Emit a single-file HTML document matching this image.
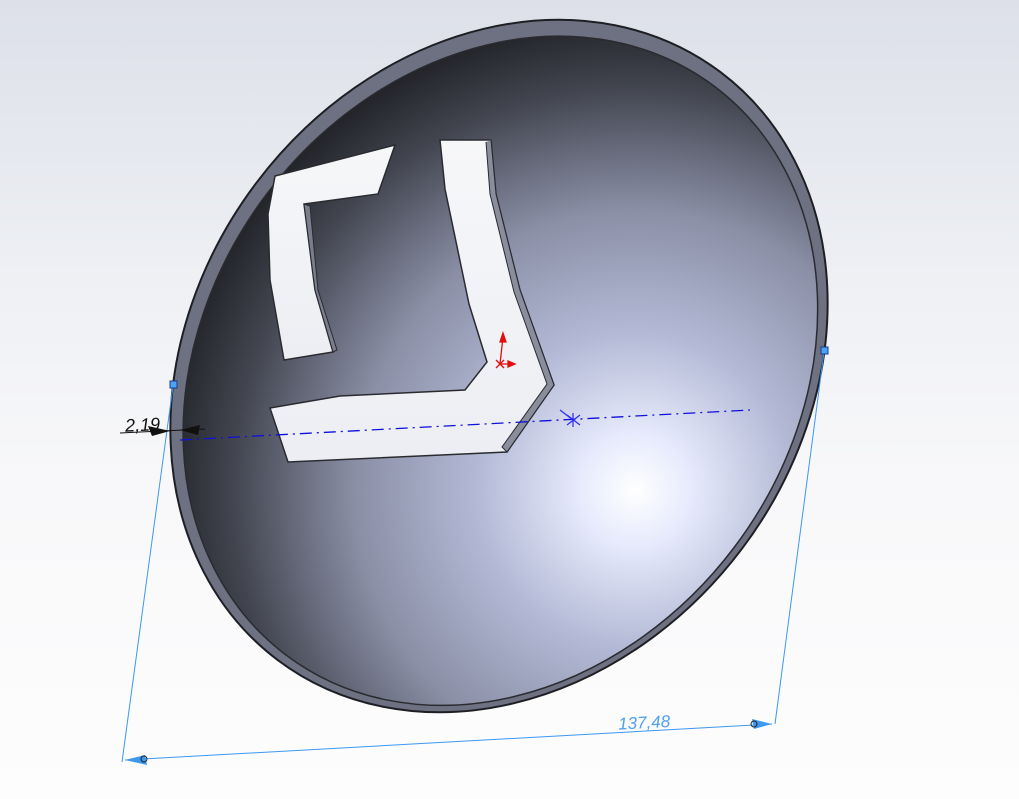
<!DOCTYPE html>
<html><head><meta charset="utf-8"><style>
html,body{margin:0;padding:0;width:1019px;height:799px;overflow:hidden;}
body{background:linear-gradient(#dde0e9 0%,#eef0f4 35%,#f8f8fa 60%,#fdfdfd 100%);}
svg{display:block}
</style></head><body>
<svg width="1019" height="799" viewBox="0 0 1019 799" xmlns="http://www.w3.org/2000/svg">
<defs>
<radialGradient id="dish" gradientUnits="userSpaceOnUse" cx="635" cy="490" r="560" gradientTransform="rotate(-37 499 366)">
<stop offset="0" stop-color="#ffffff"/>
<stop offset="0.1" stop-color="#e6eafc"/>
<stop offset="0.28" stop-color="#b4bad6"/>
<stop offset="0.5" stop-color="#8a8fa6"/>
<stop offset="0.72" stop-color="#42454f"/>
<stop offset="0.9" stop-color="#15161a"/>
</radialGradient>
<linearGradient id="cut" x1="0" y1="0" x2="0" y2="1">
<stop offset="0" stop-color="#f6f7f9"/><stop offset="1" stop-color="#eceef3"/>
</linearGradient>
</defs>
<g transform="rotate(37 499 366)">
<ellipse cx="499" cy="366" rx="304" ry="368" fill="#6e7181" stroke="#1e1f24" stroke-width="2"/>
<ellipse cx="503" cy="369" rx="293" ry="356" fill="url(#dish)" stroke="#2a2b30" stroke-width="1.5"/>
</g>
<polygon points="275,176 395,145 378,194 304,204 315,290 333,352 284,360 270,280 268,214" fill="url(#cut)" stroke="#2a2b30" stroke-width="1.5"/>
<polygon points="304,204 310,206 318,290 337,350 333,352 315,290" fill="#7a7d8c" stroke="#2a2b30" stroke-width="1"/>
<polygon points="440,140 491,140 496,194 520,290 554,385 507,452 288,462 270,408 340,396 465,390 487,362 469,304 445,189" fill="url(#cut)" stroke="#2a2b30" stroke-width="1.5"/>
<polyline points="491,140 496,194 520,290 554,385 507,452 502,447 547,384 514,292 490,194 486,142" fill="#8a8d9c" stroke="#2a2b30" stroke-width="1"/>
<line x1="180" y1="440" x2="750" y2="410" stroke="#1010d8" stroke-width="1.3" stroke-dasharray="12,5,2,5"/>
<g stroke="#2a2aee" stroke-width="1.2"><line x1="567" y1="415" x2="580" y2="425"/><line x1="567" y1="425" x2="580" y2="415"/><line x1="573" y1="413" x2="573" y2="427"/><line x1="573" y1="420" x2="560" y2="410"/></g>
<g stroke="#e01010" stroke-width="1.3" fill="#e01010"><line x1="500" y1="364" x2="503" y2="337"/><polygon points="503,333 500,342 506,342"/><line x1="500" y1="364" x2="512" y2="364"/><polygon points="515,364 508,361 508,367"/><line x1="496" y1="360" x2="504" y2="368"/><line x1="496" y1="368" x2="504" y2="360"/></g>
<g stroke="#3d98f0" stroke-width="1" fill="none">
<line x1="824" y1="352" x2="775" y2="724"/>
<line x1="173" y1="386" x2="122" y2="762"/>
<line x1="125" y1="760" x2="772" y2="724"/>
</g>
<rect x="821" y="347" width="7" height="7" fill="#4aa3f5" stroke="#1a3a8a"/>
<rect x="170" y="381" width="7" height="7" fill="#4aa3f5" stroke="#1a3a8a"/>
<polygon points="772,724 752,719 754,729" fill="#3d98f0"/>
<polygon points="125,760 145,755 147,765" fill="#3d98f0"/>
<circle cx="754" cy="724" r="3" fill="none" stroke="#222"/>
<circle cx="144" cy="759" r="3" fill="none" stroke="#222"/>
<text x="618" y="728" font-family="Liberation Sans, sans-serif" font-style="italic" font-size="17" fill="#4da0f0" transform="rotate(-3 650 720)">137,48</text>
<line x1="120" y1="433" x2="205" y2="429" stroke="#111" stroke-width="1"/>
<polygon points="170,431 148,426 152,436" fill="#111"/>
<polygon points="180,430 200,425 198,435" fill="#111"/>
<text x="125" y="431" font-family="Liberation Sans, sans-serif" font-style="italic" font-size="18" fill="#111" transform="rotate(-3 140 425)">2,19</text>
</svg>
</body></html>
